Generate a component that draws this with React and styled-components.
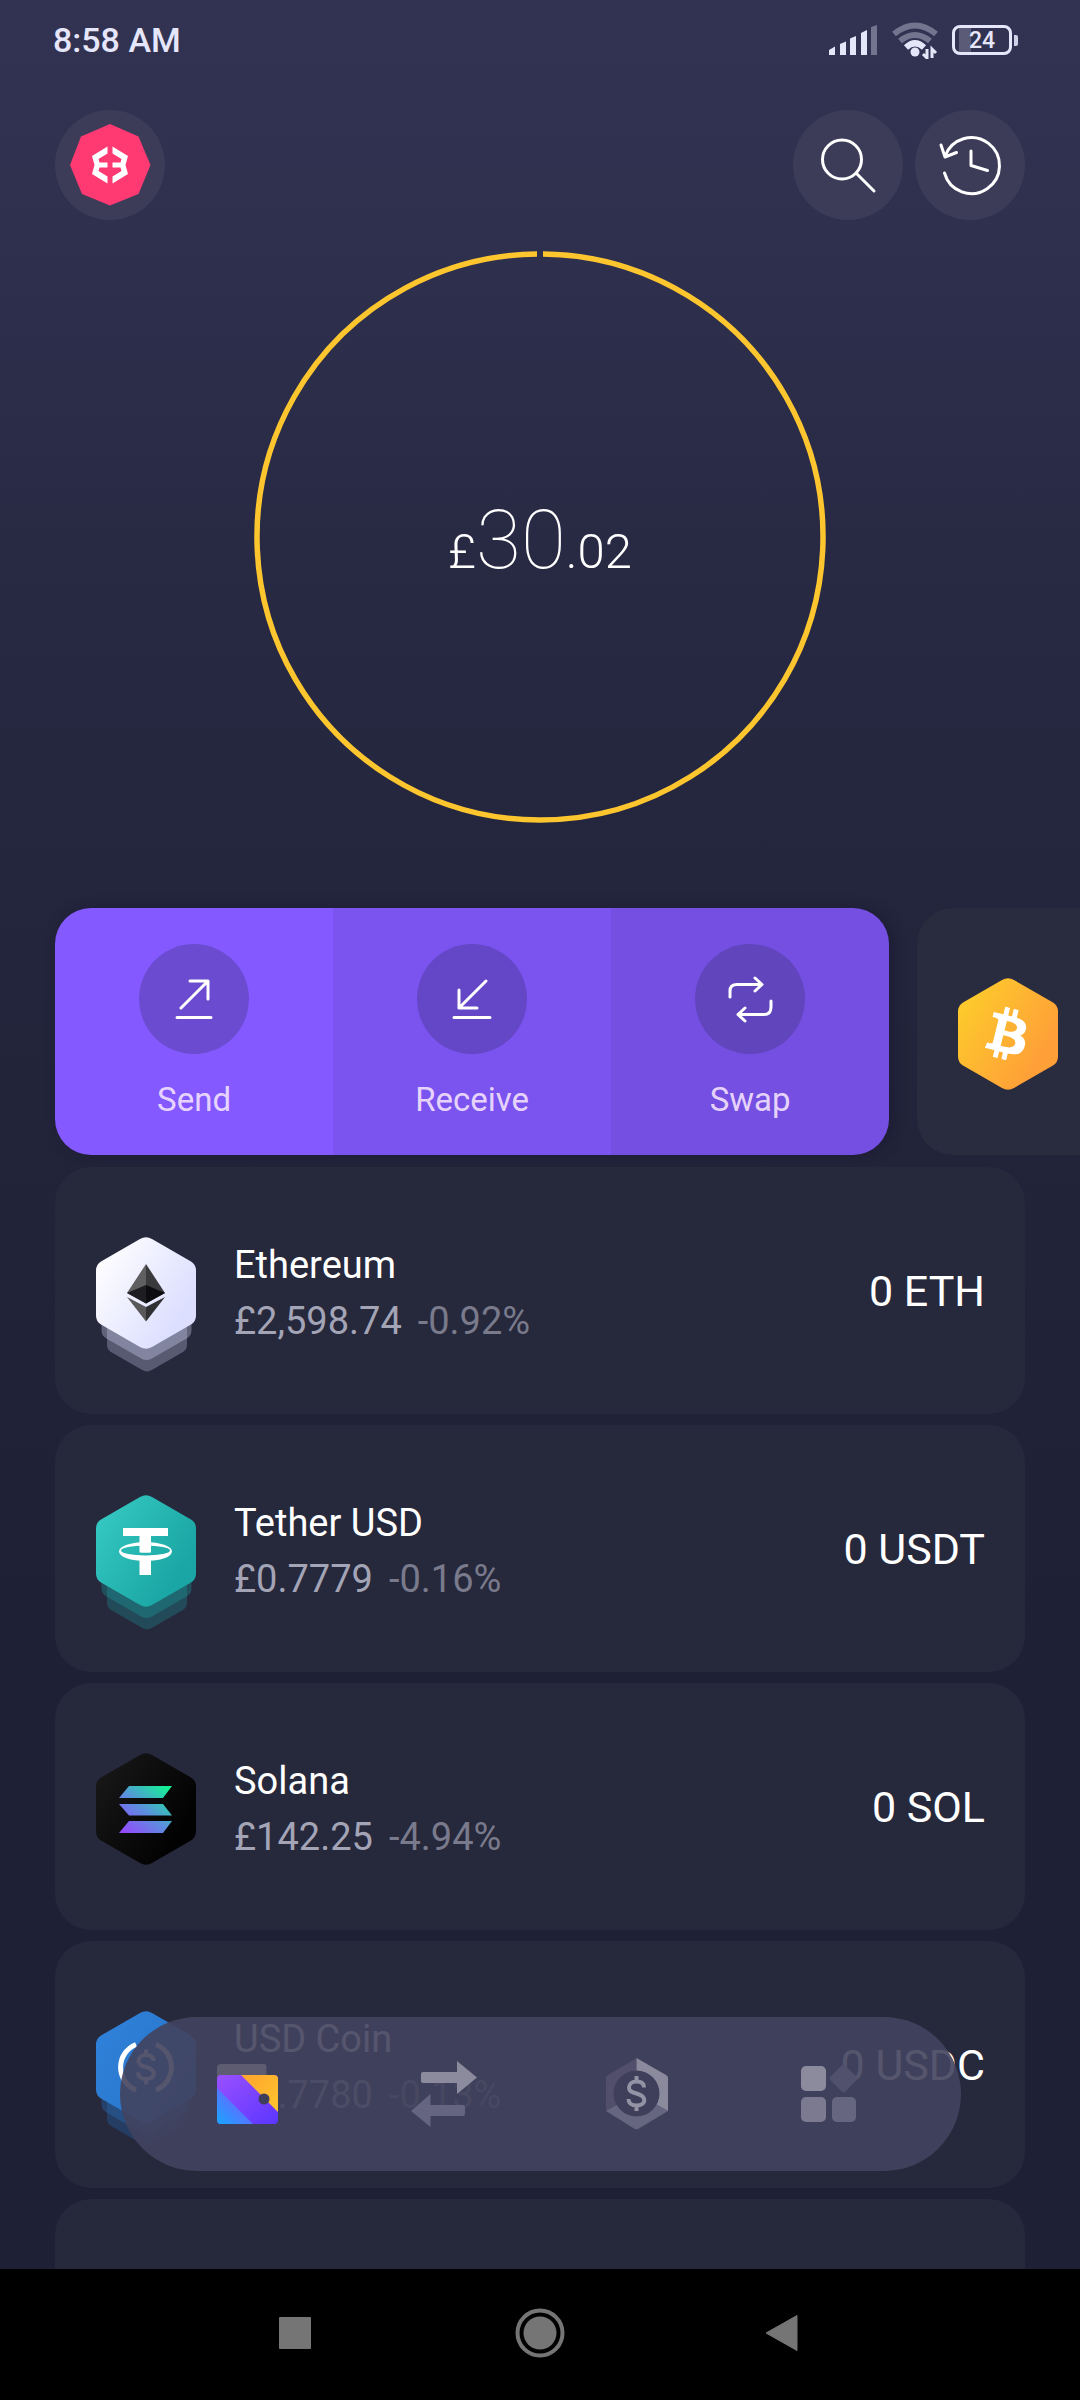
import React from "react";
import styled, { createGlobalStyle } from "styled-components";
import { FaBtc } from "react-icons/fa";

const GlobalStyle = createGlobalStyle`
  *, *::before, *::after { box-sizing: border-box; }
  body { margin: 0; background: #1e2035; }
  button { font: inherit; color: inherit; border: 0; padding: 0; background: none; cursor: pointer; }
  svg { display: block; }
`;

const Screen = styled.div`
  position: relative;
  display: flex;
  flex-direction: column;
  height: 100vh;
  overflow: hidden;
  color: #fff;
  font-family: Roboto, "Liberation Sans", sans-serif;
  background: linear-gradient(#323352 0, #2f304e 240px, #282943 550px, #23253c 950px, #1e2035 1700px);
`;

const StatusBar = styled.div`
  display: flex;
  flex: none;
  align-items: center;
  justify-content: space-between;
  height: 80px;
  padding: 0 62px 0 53px;
  color: #e6e6fa;
`;

const Clock = styled.time`
  font-size: 34px;
  font-weight: 500;
  line-height: 40px;
`;

const StatusIcons = styled.div`
  display: flex;
  align-items: center;
  gap: 14px;
`;

const Battery = styled.div`
  display: flex;
  align-items: center;
`;

const BatteryBody = styled.div`
  width: 60px;
  height: 30px;
  border: 3px solid #e6e6fa;
  border-radius: 8px;
  background: linear-gradient(90deg, transparent 4px, #5b5b78 4px, #5b5b78 16px, transparent 16px);
  font-size: 23px;
  font-weight: 500;
  line-height: 25px;
  text-align: center;
`;

const BatteryTip = styled.div`
  width: 4px;
  height: 11px;
  margin-left: 2px;
  border-radius: 0 2px 2px 0;
  background: #d0d0e6;
`;

const Header = styled.header`
  display: flex;
  flex: none;
  gap: 12px;
  padding: 30px 55px 0;
`;

const RoundButton = styled.button`
  width: 110px;
  height: 110px;
  border-radius: 50%;
  background: #3c3c59;

  &:first-child { margin-right: auto; }
`;

const Content = styled.main`
  display: flex;
  flex: 1;
  flex-direction: column;
  min-height: 0;
  padding: 31px 55px 0;
  overflow: hidden;
`;

const Balance = styled.section`
  display: grid;
  flex: none;
  place-items: center;
  margin-bottom: 85px;

  > * { grid-area: 1 / 1; }
`;

const Total = styled.div`
  padding-top: 18px;
  font-size: 82px;
  font-weight: 100;
  line-height: 100px;
`;

const TotalSmall = styled.span`
  font-size: 49px;
  font-weight: 300;
`;

const Carousel = styled.section`
  display: flex;
  flex: none;
  gap: 28px;
  margin-bottom: 12px;
`;

const ActionCard = styled.div`
  display: flex;
  flex: 0 0 86%;
  overflow: hidden;
  border-radius: 36px;
  box-shadow: 4px 0 12px rgba(24, 20, 48, 0.5);
`;

const Action = styled.button`
  display: flex;
  flex: 1;
  flex-direction: column;
  align-items: center;
  gap: 26px;
  padding: 36px 0 35px;
  background: ${(p) => p.$bg};
  font-size: 33px;
  line-height: 40px;
`;

const ActionDisc = styled.span`
  width: 110px;
  height: 110px;
  border-radius: 50%;
  background: ${(p) => p.$bg};
`;

const ActionLabel = styled.span`
  color: rgba(255, 240, 255, 0.84);
`;

const AssetPeek = styled.div`
  flex: 0 0 86%;
  padding: 70px 41px 0;
  border-radius: 36px;
  background: #292b3f;
`;

const AssetList = styled.ul`
  display: flex;
  flex: none;
  flex-direction: column;
  gap: 11px;
  margin: 0;
  padding: 0;
  list-style: none;
`;

const AssetRow = styled.li`
  display: flex;
  min-height: 247px;
  padding: 70px 40px 41px 41px;
  border-radius: 36px;
  background: #26283c;
`;

const AssetInfo = styled.div`
  flex: 1;
  padding-left: 38px;
  font-size: 38px;
  line-height: 56px;
`;

const AssetName = styled.div``;

const Price = styled.span`
  margin-right: 16px;
  color: #a3a4b6;
`;

const Change = styled.span`
  color: #797a8b;
`;

const Holding = styled.div`
  font-size: 43px;
  line-height: 108px;
`;

const TabBar = styled.nav`
  position: absolute;
  right: 119px;
  bottom: 229px;
  left: 120px;
  display: flex;
  padding: 0 30px;
  border-radius: 77px;
  background: rgba(67, 66, 94, 0.9);
`;

const Tab = styled.button`
  display: flex;
  flex: 1;
  align-items: center;
  justify-content: center;
  height: 154px;
`;

const SystemBar = styled.footer`
  display: flex;
  flex: none;
  height: 131px;
  padding: 0 173px 4px;
  background: #000;
`;

const SystemButton = styled.button`
  display: flex;
  flex: 1;
  align-items: center;
  justify-content: center;
`;

const HEX =
  "M44 2Q50 -1.5 56 2L95 24.5Q100 27.5 100 33.5V78.5Q100 84.5 95 87.5L56 110Q50 113.5 44 110L5 87.5Q0 84.5 0 78.5V33.5Q0 27.5 5 24.5Z";

function Dollar({ cx, cy, ...rest }) {
  return (
    <path
      transform={`translate(${cx} ${cy})`}
      d="M0 -17.5V-12M0 12V17.5M7.5 -6C7.5 -10 4.5 -12 0 -12C-4.5 -12 -7.5 -9.5 -7.5 -6C-7.5 -2.5 -5 -1.5 0 0C5 1.5 7.8 3 7.8 6.5C7.8 10 4.5 12 0 12C-5 12 -8 9.5 -8 5.5"
      fill="none"
      strokeWidth="4"
      {...rest}
    />
  );
}

const marks = {
  eth: (
    <g>
      <path d="M50 27L31 56L50 66.500Z" fill="#5f5f61" />
      <path d="M50 27L69 56L50 66.500Z" fill="#3a3a3c" />
      <path d="M50 48L31 56L50 66.500Z" fill="#1e1e22" />
      <path d="M50 48L69 56L50 66.500Z" fill="#0d0d11" />
      <path d="M31 60L50 70V84.500Z" fill="#58585b" />
      <path d="M69 60L50 70V84.500Z" fill="#303033" />
    </g>
  ),
  usdt: (
    <g fill="#fff">
      <path d="M27 33H72V41H55V57.500Q49.500 58.200 43.500 57.500V41H27Z" />
      <path
        fillRule="evenodd"
        d="M23 56.500A26.500 9.500 0 0 1 76 56.500A26.500 9.500 0 0 1 23 56.500ZM25 55.500A24.500 5 0 0 0 74 55.500A24.500 5 0 0 0 25 55.500Z"
      />
      <path d="M43.500 64H55V80H43.500Z" />
    </g>
  ),
  sol: (
    <g fill="url(#sol-mark)">
      <path d="M33 33H76L67 45H23Z" />
      <path d="M23 51H67L76 62.500H33Z" />
      <path d="M33 68H76L67 80H23Z" />
    </g>
  ),
  usdc: (
    <g stroke="#fff">
      <path d="M40 33.500A24.500 24.500 0 0 0 40 79M60 33.500A24.500 24.500 0 0 1 60 79" fill="none" strokeWidth="5" />
      <Dollar cx={50} cy={56} />
    </g>
  ),
  btc: (
    <g transform="rotate(14 50 56)" color="#fff">
      <FaBtc x={24} y={30} size={52} />
    </g>
  ),
};

const tones = {
  eth: ["#fdfcff", "#dcdfff"],
  usdt: ["#33c5bf", "#1aa6a4"],
  sol: ["#161617", "#020203"],
  usdc: ["#2f80d8", "#2775ca"],
  btc: ["#fdc92c", "#ff9f38"],
};

function CoinIcon({ id }) {
  const [from, to] = tones[id];
  const stacked = id !== "sol" && id !== "btc";
  return (
    <svg width="100" height="136" viewBox="0 0 100 136" aria-hidden="true">
      <defs>
        <linearGradient id={`${id}-bg`} x1="0" y1="0" x2="1" y2=".7">
          <stop offset=".15" stopColor={from} />
          <stop offset=".9" stopColor={to} />
        </linearGradient>
        <linearGradient id="sol-mark" gradientUnits="userSpaceOnUse" x1="28" y1="82" x2="68" y2="32">
          <stop offset="0" stopColor="#9945ff" />
          <stop offset=".5" stopColor="#5a90dd" />
          <stop offset="1" stopColor="#14f195" />
        </linearGradient>
      </defs>
      {stacked && (
        <g fill={to}>
          <path d={HEX} opacity=".28" transform="translate(11 45) scale(.8)" />
          <path d={HEX} opacity=".32" transform="translate(5.500 22.500) scale(.9)" />
        </g>
      )}
      <path d={HEX} fill={`url(#${id}-bg)`} />
      {marks[id]}
    </svg>
  );
}

function Signal() {
  return (
    <svg width="49" height="32" viewBox="0 0 49 32" aria-hidden="true">
      <g fill="#e6e6fa">
        <path d="M0 26L6 22.500V31H0Z" />
        <path d="M11 20L17 17.500V31H11Z" />
        <path d="M21 14.500L27 12V31H21Z" />
        <path d="M32 9L38 6V31H32Z" />
      </g>
      <path d="M42 3L48 1V31H42Z" fill="#74748e" />
    </svg>
  );
}

function Wifi() {
  return (
    <svg width="46" height="38" viewBox="0 0 46 38" fill="none" strokeWidth="6" aria-hidden="true">
      <path d="M2 13Q23 -4 44 13" stroke="#74748e" />
      <path d="M8 20Q23 8 38 20" stroke="#74748e" />
      <path d="M14 26.500Q23 18 32 26.500" stroke="#e6e6fa" />
      <circle cx="23" cy="31" r="4.500" fill="#e6e6fa" />
      <path d="M35 28V37L31 33M40 37V28L44 32" stroke="#e6e6fa" strokeWidth="3" />
    </svg>
  );
}

function Logo() {
  return (
    <svg width="110" height="110" viewBox="0 0 110 110" aria-hidden="true">
      <path d="M55 14L83.500 26.500L95.500 55L83.500 84L55 95.500L27 84L15 55L26 26.500Z" fill="#ff3a73" />
      <path
        id="logo-half"
        d="M52.500 36.500L37 46L39.500 55L37 64L52.500 73.500V66.500L43.500 61L44.500 57.500H52.500V52.500H44.500L43.500 49L52.500 43.500Z"
        fill="#fff"
      />
      <use href="#logo-half" transform="matrix(-1 0 0 1 110 0)" />
    </svg>
  );
}

function LineIcon({ d, children }) {
  return (
    <svg
      width="110"
      height="110"
      viewBox="0 0 110 110"
      fill="none"
      stroke="#fff"
      strokeWidth="3"
      strokeLinecap="round"
      strokeLinejoin="round"
      aria-hidden="true"
    >
      {children}
      <path d={d} />
    </svg>
  );
}

const actions = [
  { label: "Send", bg: "#8459ff", disc: "#6b4cd1", d: "M42 64L69 37M51 37H69V55M38 73.500H72" },
  { label: "Receive", bg: "#7b53ee", disc: "#6447c6", d: "M69 37L42 64M42 46V64H60M37 73.500H73" },
  {
    label: "Swap",
    bg: "#754fe1",
    disc: "#6045bd",
    d: "M35 53V47Q35 40.500 42 40.500H67M60 34L67 40.500L60 47M76 57V63Q76 70.500 69 70.500H43M50 64L43 70.500L50 77",
  },
];

const assets = [
  { id: "eth", name: "Ethereum", price: "£2,598.74", change: "-0.92%", holding: "0 ETH" },
  { id: "usdt", name: "Tether USD", price: "£0.7779", change: "-0.16%", holding: "0 USDT" },
  { id: "sol", name: "Solana", price: "£142.25", change: "-4.94%", holding: "0 SOL" },
  { id: "usdc", name: "USD Coin", price: "£0.7780", change: "-0.13%", holding: "0 USDC" },
];

function WalletIcon() {
  return (
    <svg width="80" height="80" viewBox="0 0 80 80" aria-hidden="true">
      <defs>
        <linearGradient id="w-orange" x1="0" y1="0" x2="1" y2="1">
          <stop offset="0" stopColor="#ffa32e" />
          <stop offset="1" stopColor="#ffc62e" />
        </linearGradient>
        <linearGradient id="w-purple" x1="0" y1="0" x2="1" y2="1">
          <stop offset="0" stopColor="#9a50ff" />
          <stop offset="1" stopColor="#5b36ff" />
        </linearGradient>
        <linearGradient id="w-blue" gradientUnits="userSpaceOnUse" x1="12" y1="68" x2="30" y2="50">
          <stop offset="0" stopColor="#1fa0ff" />
          <stop offset="1" stopColor="#5d70ff" />
        </linearGradient>
        <clipPath id="w-clip">
          <rect x="9" y="21" width="61" height="49" rx="4" />
        </clipPath>
      </defs>
      <path d="M9 26V14Q9 10 13 10H56Q58.500 10 58.500 13V26Z" fill="#5d5c70" />
      <g clipPath="url(#w-clip)">
        <path d="M9 21H70V70H9Z" fill="url(#w-purple)" />
        <path d="M32 20L70 58V20Z" fill="url(#w-orange)" />
        <path d="M9 34L45 70H9Z" fill="url(#w-blue)" />
      </g>
      <circle cx="56" cy="45" r="5.500" fill="#403f5b" />
    </svg>
  );
}

function TransferIcon() {
  return (
    <svg width="80" height="80" viewBox="0 0 80 80" aria-hidden="true">
      <path d="M20 18H54V7L74 23.500L54 40V29H20Q18 29 18 27V20Q18 18 20 18Z" fill="#8c8b9d" />
      <path d="M60 51H27.500V40L8 57L27.500 73V62H60Q62 62 62 60V53Q62 51 60 51Z" fill="#666581" />
    </svg>
  );
}

function EarnIcon() {
  return (
    <svg width="80" height="80" viewBox="0 0 80 80" aria-hidden="true">
      <path d="M38.500 39.500L8 57V24Q8 22 10 21L38.500 4Z" fill="#514f6b" />
      <path d="M38.500 39.500V4L68 21Q70 22 70 24V57Z" fill="#8b8a9d" />
      <path d="M38.500 39.500L70 57L41 74.500Q38.500 76 36 74.500L8 57Z" fill="#676681" />
      <circle cx="38.500" cy="39.500" r="23" fill="#403f5b" />
      <Dollar cx={38.5} cy={39.5} stroke="#9493a6" />
    </svg>
  );
}

function AppsIcon() {
  return (
    <svg width="80" height="80" viewBox="0 0 80 80" aria-hidden="true">
      <rect x="40" y="14" width="21" height="21" rx="3" fill="#52516d" transform="rotate(45 50.500 24.500)" />
      <rect x="8" y="12" width="25" height="25" rx="5" fill="#8c8b9d" />
      <rect x="8" y="43" width="25" height="25" rx="5" fill="#7b7a90" />
      <rect x="39" y="43" width="24" height="25" rx="5" fill="#676681" />
    </svg>
  );
}

export default function App() {
  return (
    <Screen>
      <GlobalStyle />
      <StatusBar>
        <Clock>8:58 AM</Clock>
        <StatusIcons>
          <Signal />
          <Wifi />
          <Battery>
            <BatteryBody>24</BatteryBody>
            <BatteryTip />
          </Battery>
        </StatusIcons>
      </StatusBar>

      <Header>
        <RoundButton aria-label="Profile">
          <Logo />
        </RoundButton>
        <RoundButton aria-label="Search">
          <LineIcon d="M63.500 63.500L81 81">
            <circle cx="49" cy="49.500" r="19.500" />
          </LineIcon>
        </RoundButton>
        <RoundButton aria-label="History">
          <LineIcon d="M30 46.500A28 28 0 1 1 29.500 63M26 35L30 47L41.500 42.500M56 41V55.500L72.500 60.500" />
        </RoundButton>
      </Header>

      <Content>
        <Balance>
          <svg width="572" height="572" viewBox="0 0 572 572" aria-hidden="true">
            <path
              d="M289 3.020A283 283 0 1 1 283 3.020"
              fill="none"
              stroke="#fdc62f"
              strokeWidth="5.500"
            />
          </svg>
          <Total>
            <TotalSmall>£</TotalSmall>30<TotalSmall>.02</TotalSmall>
          </Total>
        </Balance>

        <Carousel>
          <ActionCard>
            {actions.map((a) => (
              <Action key={a.label} $bg={a.bg}>
                <ActionDisc $bg={a.disc}>
                  <LineIcon d={a.d} />
                </ActionDisc>
                <ActionLabel>{a.label}</ActionLabel>
              </Action>
            ))}
          </ActionCard>
          <AssetPeek>
            <CoinIcon id="btc" />
          </AssetPeek>
        </Carousel>

        <AssetList>
          {assets.map((a) => (
            <AssetRow key={a.id}>
              <CoinIcon id={a.id} />
              <AssetInfo>
                <AssetName>{a.name}</AssetName>
                <Price>{a.price}</Price>
                <Change>{a.change}</Change>
              </AssetInfo>
              <Holding>{a.holding}</Holding>
            </AssetRow>
          ))}
          <AssetRow />
        </AssetList>
      </Content>

      <TabBar>
        <Tab aria-label="Wallet">
          <WalletIcon />
        </Tab>
        <Tab aria-label="Transfers">
          <TransferIcon />
        </Tab>
        <Tab aria-label="Earn">
          <EarnIcon />
        </Tab>
        <Tab aria-label="Apps">
          <AppsIcon />
        </Tab>
      </TabBar>

      <SystemBar>
        <SystemButton aria-label="Recent apps">
          <svg width="50" height="50" viewBox="0 0 50 50">
            <rect x="9" y="9" width="32" height="32" rx="1" fill="#757575" />
          </svg>
        </SystemButton>
        <SystemButton aria-label="Home">
          <svg width="50" height="50" viewBox="0 0 50 50">
            <circle cx="25" cy="25" r="22.500" fill="none" stroke="#757575" strokeWidth="4" />
            <circle cx="25" cy="25" r="16.500" fill="#757575" />
          </svg>
        </SystemButton>
        <SystemButton aria-label="Back">
          <svg width="50" height="50" viewBox="0 0 50 50">
            <path d="M37 7.500V42.500L6 25Z" fill="#757575" stroke="#757575" strokeWidth="1" strokeLinejoin="round" />
          </svg>
        </SystemButton>
      </SystemBar>
    </Screen>
  );
}
